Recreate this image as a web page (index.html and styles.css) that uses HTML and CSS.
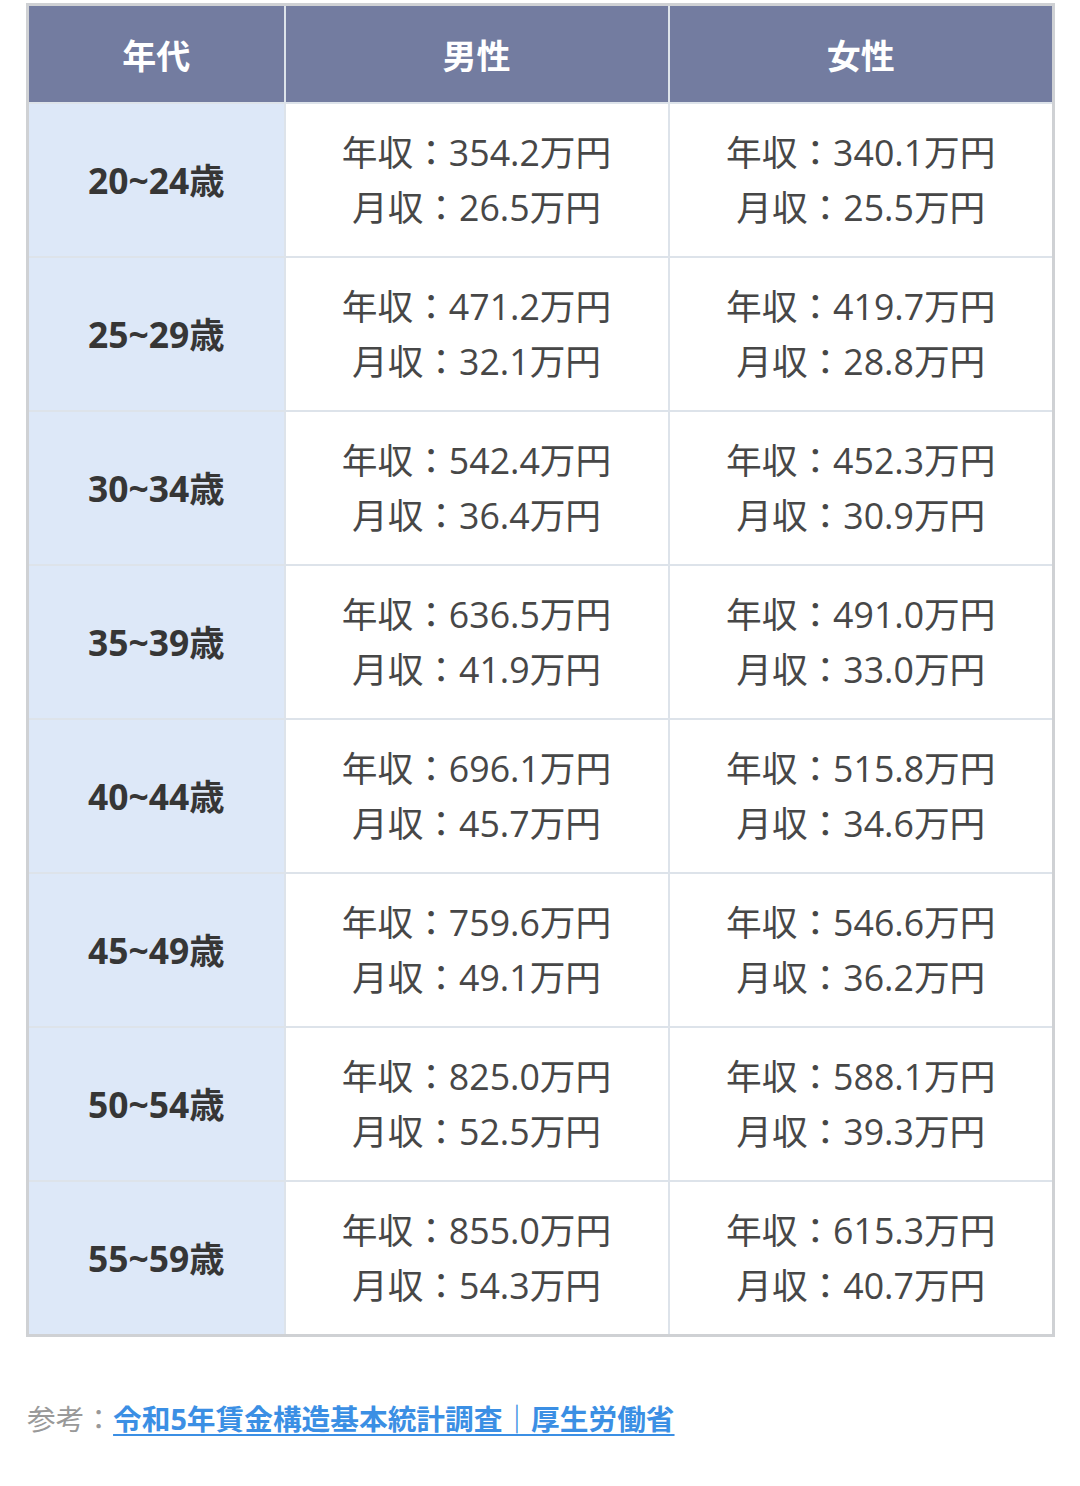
FILE: index.html
```html
<!DOCTYPE html>
<html lang="ja">
<head>
<meta charset="utf-8">
<link rel="stylesheet" href="styles.css">
</head>
<body>
<div class="page">
  <table class="salary">
    <colgroup><col class="c1"><col class="c2"><col class="c3"></colgroup>
    <thead>
      <tr><th>年代</th><th>男性</th><th>女性</th></tr>
    </thead>
    <tbody>
      <tr><td class="age">20~24歳</td><td>年収：354.2万円<br>月収：26.5万円</td><td>年収：340.1万円<br>月収：25.5万円</td></tr>
      <tr><td class="age">25~29歳</td><td>年収：471.2万円<br>月収：32.1万円</td><td>年収：419.7万円<br>月収：28.8万円</td></tr>
      <tr><td class="age">30~34歳</td><td>年収：542.4万円<br>月収：36.4万円</td><td>年収：452.3万円<br>月収：30.9万円</td></tr>
      <tr><td class="age">35~39歳</td><td>年収：636.5万円<br>月収：41.9万円</td><td>年収：491.0万円<br>月収：33.0万円</td></tr>
      <tr><td class="age">40~44歳</td><td>年収：696.1万円<br>月収：45.7万円</td><td>年収：515.8万円<br>月収：34.6万円</td></tr>
      <tr><td class="age">45~49歳</td><td>年収：759.6万円<br>月収：49.1万円</td><td>年収：546.6万円<br>月収：36.2万円</td></tr>
      <tr><td class="age">50~54歳</td><td>年収：825.0万円<br>月収：52.5万円</td><td>年収：588.1万円<br>月収：39.3万円</td></tr>
      <tr><td class="age">55~59歳</td><td>年収：855.0万円<br>月収：54.3万円</td><td>年収：615.3万円<br>月収：40.7万円</td></tr>
    </tbody>
  </table>
  <p class="source">参考：<a href="#">令和5年賃金構造基本統計調査｜厚生労働省</a></p>
</div>
</body>
</html>
```
FILE: styles.css
```css
html, body {
  margin: 0;
  padding: 0;
  background: #fff;
}
.page {
  padding: 3px 25px 0 26px;
  font-family: "Open Sans", "Noto Sans CJK JP", sans-serif;
}
.salary {
  width: 100%;
  border-collapse: collapse;
  border: 3px solid #cfd1d4;
  table-layout: fixed;
}
.c1 { width: 257px; }
.c2 { width: 384px; }
.salary th,
.salary td {
  border: 2px solid #dde3ea;
  text-align: center;
  vertical-align: middle;
  padding: 0;
}
.salary th {
  height: 96px;
  background: #737ca0;
  color: #fff;
  font-size: 34px;
  font-weight: 700;
  border-color: #dde3ea;
  border-top: 3px solid #cfd1d4;
}
.salary td {
  height: 152px;
  font-size: 35.7px;
  line-height: 55px;
  color: #474747;
}
.salary td.age {
  background: #dde8f8;
  color: #363636;
  font-weight: 700;
  font-size: 35.4px;
}
.salary th:first-child,
.salary td:first-child { border-left: 3px solid #cfd1d4; }
.salary th:last-child,
.salary td:last-child { border-right: 3px solid #cfd1d4; }
.salary tr:last-child td { border-bottom: 3px solid #cfd1d4; }
.source {
  margin: 62px 0 0 1px;
  font-size: 28.7px;
  line-height: 40px;
  color: #999;
}
.source a {
  color: #3b8fe4;
  font-weight: 700;
  text-decoration: underline;
  text-underline-offset: 4px;
  text-decoration-thickness: 2px;
}
```
